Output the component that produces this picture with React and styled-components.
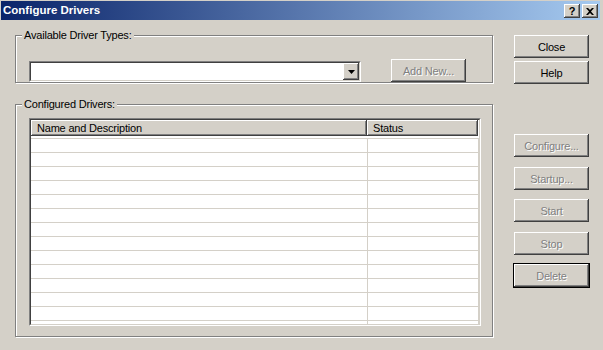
import React from 'react';
import styled, { createGlobalStyle } from 'styled-components';

const GlobalStyle = createGlobalStyle`
  html, body { margin: 0; padding: 0; background: #D4D0C8; }
  body { font-family: "Liberation Sans", Arial, sans-serif; font-size: 11px; letter-spacing: -0.2px; color: #000; }
`;

const raised = `
  box-shadow: inset -1px -1px 0 #404040, inset 1px 1px 0 #ffffff,
    inset -2px -2px 0 #808080, inset 2px 2px 0 #D4D0C8;
`;

const Window = styled.div`
  width: 603px;
  height: 350px;
  box-sizing: border-box;
  padding: 1px 3px 0 1px;
  background: #D4D0C8;
  display: flex;
  flex-direction: column;
  overflow: hidden;
`;

const TitleBar = styled.div`
  height: 19px;
  flex: none;
  display: flex;
  align-items: center;
  padding: 0 2px 0 2px;
  background: linear-gradient(to right, #0A246A, #A6CAF0);
`;

const Title = styled.div`
  flex: 1;
  color: #fff;
  font-weight: bold;
  font-size: 11.5px;
  letter-spacing: 0;
  line-height: 19px;
  white-space: nowrap;
`;

const TitleButtons = styled.div`
  display: flex;
  gap: 2px;
  margin-top: 1px;
`;

const TitleButton = styled.div`
  width: 16px;
  height: 14px;
  box-sizing: border-box;
  background: #D4D0C8;
  ${raised}
  display: flex;
  align-items: center;
  justify-content: center;
  font-weight: bold;
  font-size: 11px;
  line-height: 14px;
  color: #000;
`;

const Content = styled.div`
  display: flex;
  padding: 15px 0 0 14px;
`;

const LeftCol = styled.div`
  width: 478px;
  display: flex;
  flex-direction: column;
`;

const GroupBox = styled.div`
  position: relative;
  box-sizing: border-box;
  height: ${(p) => p.$h}px;
  margin-top: ${(p) => p.$mt || 0}px;
  border: 1px solid #808080;
  box-shadow: 1px 1px 0 #ffffff, inset 1px 1px 0 #ffffff;
  padding: ${(p) => p.$pad};
  display: flex;
  align-items: flex-end;
  gap: 30px;
`;

const Legend = styled.div`
  position: absolute;
  top: -7px;
  left: 6px;
  padding: 0 2px;
  line-height: 13px;
  background: #D4D0C8;
  white-space: nowrap;
`;

const Combo = styled.div`
  width: 332px;
  height: 21px;
  box-sizing: border-box;
  background: #fff;
  border-top: 1px solid #808080;
  border-left: 1px solid #808080;
  border-right: 1px solid #ffffff;
  border-bottom: 1px solid #ffffff;
  display: flex;
`;

const ComboInner = styled.div`
  flex: 1;
  border-top: 1px solid #404040;
  border-left: 1px solid #404040;
  border-right: 1px solid #D4D0C8;
  border-bottom: 1px solid #D4D0C8;
  display: flex;
  justify-content: flex-end;
`;

const DropButton = styled.div`
  width: 16px;
  height: 17px;
  background: #D4D0C8;
  ${raised}
  display: flex;
  align-items: center;
  justify-content: center;
`;

const Button = styled.button`
  width: ${(p) => (p.$default ? 77 : 75)}px;
  height: ${(p) => (p.$default ? 25 : 23)}px;
  box-sizing: border-box;
  margin: ${(p) => p.$mt || 0}px 0 0 0;
  padding: 0;
  border: ${(p) => (p.$default ? '1px solid #000' : 'none')};
  background: #D4D0C8;
  ${raised}
  font-family: "Liberation Sans", Arial, sans-serif;
  font-size: 11px;
  letter-spacing: -0.2px;
  color: ${(p) => (p.disabled ? '#808080' : '#000')};
  text-shadow: ${(p) => (p.disabled ? '1px 1px 0 #ffffff' : 'none')};
  flex: none;
`;

const ListFrame = styled.div`
  width: 452px;
  height: 208px;
  box-sizing: border-box;
  border-top: 1px solid #808080;
  border-left: 1px solid #808080;
  border-right: 1px solid #ffffff;
  border-bottom: 1px solid #ffffff;
  display: flex;
  align-self: flex-start;
`;

const ListClient = styled.div`
  flex: 1;
  border-top: 1px solid #404040;
  border-left: 1px solid #404040;
  border-right: 1px solid #D4D0C8;
  border-bottom: 1px solid #D4D0C8;
  background: #fff;
  overflow: hidden;
  display: flex;
  flex-direction: column;
`;

const Header = styled.div`
  display: flex;
  height: 16px;
  flex: none;
`;

const HeaderCell = styled.div`
  width: ${(p) => p.$w}px;
  box-sizing: border-box;
  padding-left: 6px;
  background: #D4D0C8;
  box-shadow: inset -1px -1px 0 #404040, inset 1px 1px 0 #ffffff, inset -2px -2px 0 #808080;
  line-height: 16px;
  white-space: nowrap;
`;

const Body = styled.div`
  padding-top: 2px;
  display: flex;
  flex-direction: column;
`;

const Row = styled.div`
  display: flex;
  height: 14px;
  flex: none;
  box-sizing: border-box;
  border-top: 1px solid #D4D0C8;
`;

const Cell = styled.div`
  width: ${(p) => p.$w}px;
  box-sizing: border-box;
  border-right: 1px solid #D4D0C8;
`;

const RightCol = styled.div`
  width: 77px;
  margin-left: 20px;
  display: flex;
  flex-direction: column;
  align-items: center;
`;

const rows = Array.from({ length: 14 }, (_, i) => i);

export default function App() {
  return (
    <>
      <GlobalStyle />
      <Window>
        <TitleBar>
          <Title>Configure Drivers</Title>
          <TitleButtons>
            <TitleButton>?</TitleButton>
            <TitleButton>
              <svg width="8" height="7" viewBox="0 0 8 7">
                <path d="M0 0h2l2 2 2-2h2L5 3.5 8 7H6L4 5 2 7H0l3-3.5z" fill="#000" />
              </svg>
            </TitleButton>
          </TitleButtons>
        </TitleBar>
        <Content>
          <LeftCol>
            <GroupBox $h={48} $pad="0 0 0 13px">
              <Legend>Available Driver Types:</Legend>
              <Combo>
                <ComboInner>
                  <DropButton>
                    <svg width="7" height="4" viewBox="0 0 7 4">
                      <path d="M0 0h7L3.5 4z" fill="#000" />
                    </svg>
                  </DropButton>
                </ComboInner>
              </Combo>
              <Button disabled>Add New...</Button>
            </GroupBox>
            <GroupBox $h={233} $mt={21} $pad="13px 0 0 13px">
              <Legend>Configured Drivers:</Legend>
              <ListFrame>
                <ListClient>
                  <Header>
                    <HeaderCell $w={336}>Name and Description</HeaderCell>
                    <HeaderCell $w={111}>Status</HeaderCell>
                  </Header>
                  <Body>
                    {rows.map((i) => (
                      <Row key={i}>
                        <Cell $w={337} />
                        <Cell $w={111} />
                      </Row>
                    ))}
                  </Body>
                </ListClient>
              </ListFrame>
            </GroupBox>
          </LeftCol>
          <RightCol>
            <Button>Close</Button>
            <Button $mt={3}>Help</Button>
            <Button $mt={50} disabled>Configure...</Button>
            <Button $mt={10} disabled>Startup...</Button>
            <Button $mt={9} disabled>Start</Button>
            <Button $mt={10} disabled>Stop</Button>
            <Button $mt={8} $default disabled>Delete</Button>
          </RightCol>
        </Content>
      </Window>
    </>
  );
}
